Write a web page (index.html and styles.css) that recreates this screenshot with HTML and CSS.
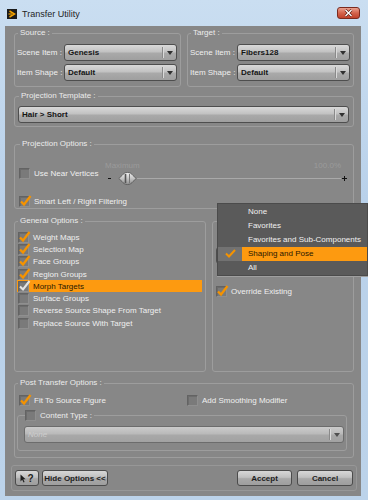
FILE: index.html
```html
<!DOCTYPE html>
<html lang="en">
<head>
    <meta charset="UTF-8">
    <title>Transfer Utility</title>
    <link rel="stylesheet" href="styles.css">
</head>
<body>
    <div class="window">
        <div class="titlebar">
            <svg class="app-icon" width="10" height="10" viewBox="0 0 10 10">
                <rect width="10" height="10" fill="#1b1b1b"/>
                <path d="M2.5 2 L7.5 5 L2.5 8" fill="none" stroke="#f5a300" stroke-width="1.5"/>
                <path d="M1.5 5 H5" stroke="#f5a300" stroke-width="1.2"/>
            </svg>
            <span class="title">Transfer Utility</span>
            <div class="close-btn">
                <svg width="9" height="8" viewBox="0 0 9 8">
                    <path d="M1.5 1 L7.5 7 M7.5 1 L1.5 7" stroke="#5a1a10" stroke-width="2.6"/>
                    <path d="M1.5 1 L7.5 7 M7.5 1 L1.5 7" stroke="#ffffff" stroke-width="1.4"/>
                </svg>
            </div>
        </div>

        <div class="client">
            <div class="pair">
                <fieldset class="group item-box">
                    <legend>Source :</legend>
                    <div class="form">
                        <span class="lbl">Scene Item :</span>
                        <div class="combo"><span class="val">Genesis</span><span class="arrow"></span></div>
                        <span class="lbl">Item Shape :</span>
                        <div class="combo"><span class="val">Default</span><span class="arrow"></span></div>
                    </div>
                </fieldset>
                <fieldset class="group item-box">
                    <legend>Target :</legend>
                    <div class="form">
                        <span class="lbl">Scene Item :</span>
                        <div class="combo"><span class="val">Fibers128</span><span class="arrow"></span></div>
                        <span class="lbl">Item Shape :</span>
                        <div class="combo"><span class="val">Default</span><span class="arrow"></span></div>
                    </div>
                </fieldset>
            </div>

            <fieldset class="group template">
                <legend>Projection Template :</legend>
                <div class="combo"><span class="val">Hair &gt; Short</span><span class="arrow"></span></div>
            </fieldset>

            <fieldset class="group proj">
                <legend>Projection Options :</legend>
                <div class="near-row">
                    <div class="check-row"><span class="cb"></span>Use Near Vertices</div>
                    <div class="slider">
                        <div class="slider-top"><span>Maximum</span><span>100.0%</span></div>
                        <div class="slider-bar">
                            <span class="minus"></span>
                            <svg class="thumb" width="19" height="17" viewBox="0 0 19 17">
                                <defs>
                                    <linearGradient id="tg" x1="0" y1="0" x2="0" y2="1">
                                        <stop offset="0" stop-color="#f2f2f2"/>
                                        <stop offset="0.5" stop-color="#c4c4c4"/>
                                        <stop offset="1" stop-color="#8e8e8e"/>
                                    </linearGradient>
                                </defs>
                                <path d="M0.8 8.5 L4 5.5 A6.5 6.5 0 0 1 15 5.5 L18.2 8.5 L15 11.5 A6.5 6.5 0 0 1 4 11.5 Z" fill="url(#tg)" stroke="#5c5c5c" stroke-width="0.9"/>
                                <path d="M7.5 4 V13" stroke="#555" stroke-width="1.6"/>
                                <path d="M11.5 4 V13" stroke="#777" stroke-width="1"/>
                            </svg>
                            <span class="track"></span>
                            <span class="plus"></span>
                        </div>
                    </div>
                </div>
                <div class="check-row smart">
                    <span class="cb"><svg class="tick" width="13" height="12" viewBox="0 0 13 12"><path d="M2 6.5 L5 9.5 L11.5 1" fill="none" stroke="#f59300" stroke-width="2.3"/></svg></span>Smart Left / Right Filtering
                </div>
            </fieldset>

            <div class="pair general">
                <fieldset class="group gen-left">
                    <legend>General Options :</legend>
                    <div class="rows">
                        <div class="check-row"><span class="cb"><svg class="tick" width="13" height="12" viewBox="0 0 13 12"><path d="M2 6.5 L5 9.5 L11.5 1" fill="none" stroke="#f59300" stroke-width="2.3"/></svg></span>Weight Maps</div>
                        <div class="check-row"><span class="cb"><svg class="tick" width="13" height="12" viewBox="0 0 13 12"><path d="M2 6.5 L5 9.5 L11.5 1" fill="none" stroke="#f59300" stroke-width="2.3"/></svg></span>Selection Map</div>
                        <div class="check-row"><span class="cb"><svg class="tick" width="13" height="12" viewBox="0 0 13 12"><path d="M2 6.5 L5 9.5 L11.5 1" fill="none" stroke="#f59300" stroke-width="2.3"/></svg></span>Face Groups</div>
                        <div class="check-row"><span class="cb"><svg class="tick" width="13" height="12" viewBox="0 0 13 12"><path d="M2 6.5 L5 9.5 L11.5 1" fill="none" stroke="#f59300" stroke-width="2.3"/></svg></span>Region Groups</div>
                        <div class="check-row selected"><span class="cb"><svg class="tick" width="13" height="12" viewBox="0 0 13 12"><path d="M2 6.5 L5 9.5 L11.5 1" fill="none" stroke="#e4e4e4" stroke-width="2.1"/></svg></span>Morph Targets</div>
                        <div class="check-row"><span class="cb"></span>Surface Groups</div>
                        <div class="check-row"><span class="cb"></span>Reverse Source Shape From Target</div>
                        <div class="check-row"><span class="cb"></span>Replace Source With Target</div>
                    </div>
                </fieldset>
                <fieldset class="group gen-right">
                    <div class="right-body">
                        <div class="combo"><span class="val"></span><span class="arrow"></span></div>
                        <div class="check-row override"><span class="cb"><svg class="tick" width="13" height="12" viewBox="0 0 13 12"><path d="M2 6.5 L5 9.5 L11.5 1" fill="none" stroke="#f59300" stroke-width="2.3"/></svg></span>Override Existing</div>
                    </div>
                </fieldset>
            </div>

            <fieldset class="group post">
                <legend>Post Transfer Options :</legend>
                <div class="post-row">
                    <div class="check-row fit"><span class="cb"><svg class="tick" width="13" height="12" viewBox="0 0 13 12"><path d="M2 6.5 L5 9.5 L11.5 1" fill="none" stroke="#f59300" stroke-width="2.3"/></svg></span>Fit To Source Figure</div>
                    <div class="check-row"><span class="cb"></span>Add Smoothing Modifier</div>
                </div>
                <fieldset class="group content-type">
                    <legend><span class="check-row"><span class="cb"></span>Content Type :</span></legend>
                    <div class="combo disabled"><span class="val">None</span><span class="arrow"></span></div>
                </fieldset>
            </fieldset>

            <div class="button-bar">
                <div class="btn help">
                    <svg width="6" height="9" viewBox="0 0 6 9"><path d="M0.5 0.5 V7.5 L2.2 5.8 L3.6 8.6 L4.6 8.1 L3.3 5.3 L5.6 5.3 Z" fill="#1d1d1d"/></svg>
                    <span>?</span>
                </div>
                <div class="btn hide">Hide Options &lt;&lt;</div>
                <div class="btn accept">Accept</div>
                <div class="btn cancel">Cancel</div>
            </div>
        </div>

        <div class="menu">
            <div class="menu-item"><span class="gutter"></span><span class="text">None</span></div>
            <div class="menu-item"><span class="gutter"></span><span class="text">Favorites</span></div>
            <div class="menu-item"><span class="gutter"></span><span class="text">Favorites and Sub-Components</span></div>
            <div class="menu-item current">
                <span class="gutter"><svg width="11" height="9" viewBox="0 0 11 9"><path d="M1 4.5 L4 7.5 L10 1" fill="none" stroke="#f59300" stroke-width="2"/></svg></span>
                <span class="text">Shaping and Pose</span>
            </div>
            <div class="menu-item"><span class="gutter"></span><span class="text">All</span></div>
        </div>
    </div>
</body>
</html>
```

FILE: styles.css
```css
* {
    box-sizing: border-box;
}

body {
    margin: 0;
    font-family: "Liberation Sans", Arial, sans-serif;
    font-size: 8px;
    color: #efefef;
    background-color: #ffffff;
}

.window {
    position: relative;
    width: 368px;
    height: 500px;
    display: flex;
    flex-direction: column;
    background: linear-gradient(#cadef1, #b9d1ea 40%, #bcd3ea);
}

/* title bar */

.titlebar {
    height: 26px;
    display: flex;
    align-items: center;
    padding: 2px 8px 0 7px;
}

.app-icon {
    display: block;
}

.title {
    margin-left: 5px;
    font-size: 9px;
    color: #1e1e1e;
}

.close-btn {
    margin-left: auto;
    align-self: flex-start;
    margin-top: 5px;
    width: 23px;
    height: 12px;
    border: 1px solid #7b2b1f;
    border-radius: 3px;
    background: linear-gradient(#eaa18f, #d4644c 50%, #c0412a);
    display: flex;
    align-items: center;
    justify-content: center;
}

.close-btn svg {
    display: block;
}

/* client area */

.client {
    flex: 1;
    margin: 0 7px 4px 5px;
    padding: 2px 7px 0 9px;
    background-color: #878787;
    display: flex;
    flex-direction: column;
}

.group {
    margin: 0;
    padding: 0;
    min-width: 0;
    border: 1px solid #9d9d9d;
    border-radius: 3px;
}

.group legend {
    height: 10px;
    line-height: 10px;
    padding: 0 2px;
    margin-left: 1px;
    color: #ececec;
}

.pair {
    display: flex;
    gap: 6px;
}

.item-box {
    flex: 1;
    padding: 0 3px 5px 2px;
}

.form {
    display: grid;
    grid-template-columns: 47px 1fr;
    row-gap: 3px;
    align-items: center;
    padding-top: 6px;
}

.lbl {
    white-space: nowrap;
}

/* combo boxes */

.combo {
    height: 17px;
    display: flex;
    align-items: center;
    border: 1px solid #4e4e4e;
    border-radius: 3px;
    background: linear-gradient(#d9d9d9, #c2c2c2 45%, #a9a9a9 55%, #9f9f9f);
    color: #151515;
    font-weight: bold;
}

.combo .val {
    flex: 1;
    padding-left: 3px;
    white-space: nowrap;
    overflow: hidden;
}

.combo .arrow {
    width: 14px;
    height: 11px;
    border-left: 1px solid #8a8a8a;
    box-shadow: inset 1px 0 0 #dadada;
    position: relative;
}

.combo .arrow::after {
    content: "";
    position: absolute;
    left: 4px;
    top: 4px;
    border-left: 3px solid transparent;
    border-right: 3px solid transparent;
    border-top: 4px solid #303030;
}

.combo.disabled {
    border-color: #6c6c6c;
    background: linear-gradient(#cbcbcb, #bababa 45%, #a8a8a8 55%, #a2a2a2);
    color: #cdcdcd;
    font-weight: normal;
    font-style: italic;
}

.combo.disabled .arrow::after {
    border-top-color: #505050;
}

.template {
    margin-top: 4px;
    padding: 5px 4px 3px 3px;
}

.template legend {
    margin-left: 1px;
}

/* check boxes */

.check-row {
    display: flex;
    align-items: center;
    gap: 4px;
    height: 12.3px;
    white-space: nowrap;
}

.cb {
    position: relative;
    width: 11px;
    height: 11px;
    flex: none;
    background-color: #7a7a7a;
    border: 1px solid #636363;
    border-right-color: #8f8f8f;
    border-bottom-color: #8f8f8f;
    box-shadow: inset 1px 1px 0 #6c6c6c;
}

.tick {
    position: absolute;
    left: -1px;
    top: -2px;
}

/* projection options */

.proj {
    margin-top: 12px;
    padding: 12px 6px 1px 4px;
}

.near-row {
    display: flex;
    align-items: center;
    height: 26px;
}

.slider {
    margin-left: auto;
    width: 242px;
    display: flex;
    flex-direction: column;
}

.slider-top {
    height: 9px;
    line-height: 9px;
    display: flex;
    justify-content: space-between;
    padding-right: 6px;
    color: #9b9b9b;
}

.slider-bar {
    height: 17px;
    display: flex;
    align-items: center;
}

.minus {
    width: 3px;
    height: 1px;
    margin-left: 3px;
    margin-right: 7px;
    background-color: #111111;
}

.thumb {
    display: block;
    flex: none;
}

.track {
    flex: 1;
    height: 1px;
    background-color: #a9a9a9;
}

.plus {
    position: relative;
    width: 5px;
    height: 5px;
    margin-left: 1px;
}

.plus::before,
.plus::after {
    content: "";
    position: absolute;
    background-color: #111111;
}

.plus::before {
    left: 0;
    top: 2px;
    width: 5px;
    height: 1px;
}

.plus::after {
    left: 2px;
    top: 0;
    width: 1px;
    height: 5px;
}

.smart {
    margin-top: 8px;
    height: 12px;
}

/* general options */

.general {
    margin-top: 7px;
}

.gen-left {
    width: 192px;
    flex: none;
    padding: 0 3px 0 2px;
}

.gen-left .rows {
    height: 145px;
    padding-top: 5px;
}

.gen-left .check-row {
    padding-left: 1px;
}

.check-row.selected {
    background-color: #fd9a10;
    color: #2a1800;
}

.gen-right {
    flex: 1;
    margin-top: 5px;
    padding: 25px 4px 0 3px;
}

.override {
    margin-top: 21px;
}

/* post transfer options */

.post {
    margin-top: 6px;
    padding: 0 6px 6px 2px;
}

.post-row {
    display: flex;
    padding: 6px 0 0 2px;
    height: 18px;
}

.fit {
    width: 168px;
}

.content-type {
    margin-top: 4px;
    padding: 5px 2px 7px 6px;
}

.content-type legend {
    height: 11px;
    padding: 0 2px 0 0;
    margin-left: 1px;
}

.content-type legend .check-row {
    height: 11px;
}

/* bottom buttons */

.button-bar {
    margin: 7px -3px 0;
    padding: 4px 3px;
    border: 1px solid #979797;
    border-radius: 3px;
    display: flex;
    gap: 3px;
}

.btn {
    height: 16px;
    display: flex;
    align-items: center;
    justify-content: center;
    gap: 1px;
    border: 1px solid #4b4b4b;
    border-radius: 3px;
    background: linear-gradient(#d7d7d7, #c0c0c0 45%, #a8a8a8 55%, #9e9e9e);
    color: #1d1d1d;
    font-weight: bold;
}

.btn.help {
    width: 24px;
    font-size: 10px;
}

.btn.hide {
    width: 66px;
}

.btn.accept {
    width: 55px;
    margin-left: auto;
    margin-right: 2px;
}

.btn.cancel {
    width: 56px;
}

/* open drop-down menu */

.menu {
    position: absolute;
    left: 217px;
    top: 203px;
    width: 151px;
    height: 73px;
    background-color: #5a5a5a;
    border: 1px solid #4b4b4b;
    box-shadow: 0 1px 0 #9f9f9f;
}

.menu-item {
    display: flex;
    height: 14.2px;
    color: #f0f0f0;
}

.menu-item .gutter {
    width: 24px;
    flex: none;
    display: flex;
    align-items: center;
    justify-content: center;
}

.menu-item .text {
    flex: 1;
    display: flex;
    align-items: center;
    padding-left: 6px;
    white-space: nowrap;
}

.menu-item.current .gutter {
    background-color: #727272;
}

.menu-item.current .text {
    background-color: #fd9a10;
    color: #2a1800;
}
```
